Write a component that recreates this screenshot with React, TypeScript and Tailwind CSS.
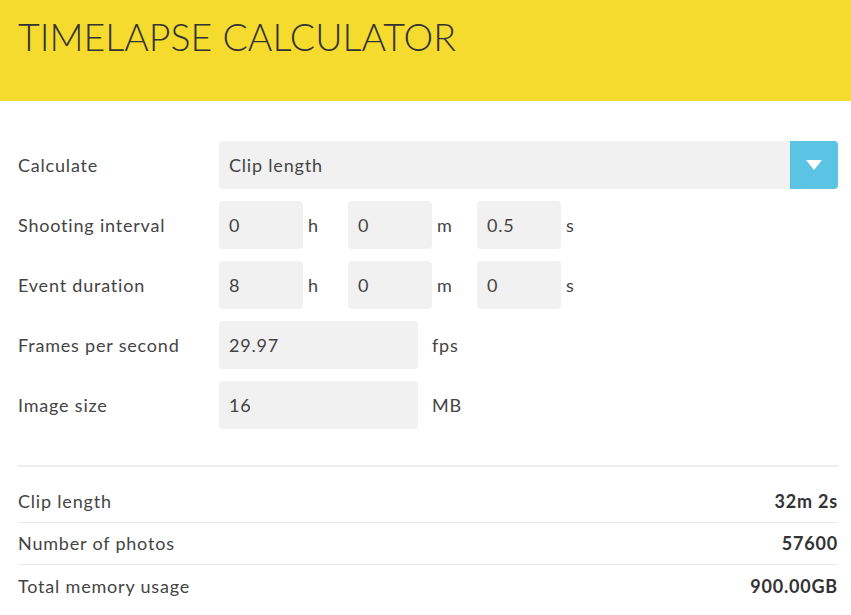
import { FC } from "react";

const font = { fontFamily: "Lato, 'Open Sans', sans-serif" };

interface UnitProps {
  value: string;
  unit: string;
}

const SmallInput: FC<UnitProps> = ({ value, unit }) => (
  <div className="flex items-center w-[129px]">
    <div className="w-[84px] h-12 bg-[#f1f1f1] rounded flex items-center px-[10px]">{value}</div>
    <span className="ml-[5px]">{unit}</span>
  </div>
);

const WideInput: FC<UnitProps> = ({ value, unit }) => (
  <div className="flex items-center">
    <div className="w-[199px] h-12 bg-[#f1f1f1] rounded flex items-center px-[10px]">{value}</div>
    <span className="ml-[14px]">{unit}</span>
  </div>
);

const Row: FC<{ label: string; children: React.ReactNode }> = ({ label, children }) => (
  <div className="flex items-center h-12">
    <div className="w-[201px] shrink-0">{label}</div>
    <div className="flex flex-1 items-center">{children}</div>
  </div>
);

const results = [
  { label: "Clip length", value: "32m 2s" },
  { label: "Number of photos", value: "57600" },
  { label: "Total memory usage", value: "900.00GB" },
];

export default function App() {
  return (
    <div className="w-[851px] h-[615px] bg-white text-[#444] overflow-hidden" style={font}>
      <header className="bg-[#f5db2e] h-[101px] pl-[18px] pt-[9px]">
        <h1 className="text-[37.5px] font-light text-[#333]">TIMELAPSE CALCULATOR</h1>
      </header>

      <div className="pl-[18px] pr-[13px] pt-[40px] text-[18px] tracking-[0.8px]">
        <div className="flex flex-col gap-3">
          <Row label="Calculate">
            <div className="flex flex-1 h-12 bg-[#f1f1f1] rounded items-center">
              <span className="flex-1 px-[10px]">Clip length</span>
              <div className="w-12 h-12 bg-[#5bc4e4] rounded-r flex items-center justify-center">
                <svg width="16" height="10" viewBox="0 0 16 10">
                  <path d="M0 0 L16 0 L8 10 Z" fill="#fff" />
                </svg>
              </div>
            </div>
          </Row>
          <Row label="Shooting interval">
            <SmallInput value="0" unit="h" />
            <SmallInput value="0" unit="m" />
            <SmallInput value="0.5" unit="s" />
          </Row>
          <Row label="Event duration">
            <SmallInput value="8" unit="h" />
            <SmallInput value="0" unit="m" />
            <SmallInput value="0" unit="s" />
          </Row>
          <Row label="Frames per second">
            <WideInput value="29.97" unit="fps" />
          </Row>
          <Row label="Image size">
            <WideInput value="16" unit="MB" />
          </Row>
        </div>

        <div className="mt-[36px] border-t-2 border-[#eeeeee]" />

        <div className="mt-[14px]">
          {results.map((r, i) => (
            <div
              key={r.label}
              className={`flex justify-between items-center h-[42px] ${i < results.length - 1 ? "border-b border-[#e8e8e8]" : ""}`}
            >
              <span>{r.label}</span>
              <span className="font-bold text-[#333]">{r.value}</span>
            </div>
          ))}
        </div>
      </div>
    </div>
  );
}
